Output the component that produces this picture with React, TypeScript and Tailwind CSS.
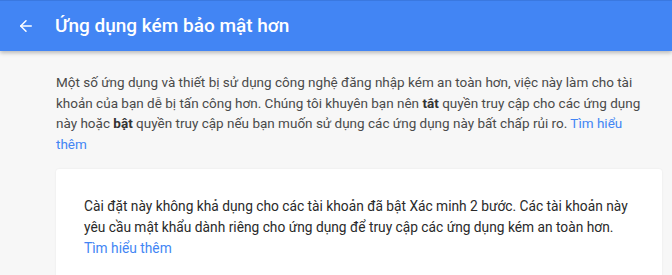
import { ArrowLeft } from 'lucide-react'

export default function App() {
  return (
    <div className="min-h-[275px] w-full bg-[#f7f7f7] font-['Roboto',sans-serif]">
      {/* Header */}
      <div className="flex h-[51px] items-center border-t border-[#3a78e0] bg-[#4285f4] shadow-[0_2px_4px_rgba(0,0,0,0.25)]">
        <ArrowLeft className="ml-[17px] h-[18px] w-[18px] text-white" strokeWidth={2} />
        <h1 className="ml-[20px] text-[19px] font-medium text-white">Ứng dụng kém bảo mật hơn</h1>
      </div>

      <div className="px-[56px] pt-[21px]">
        <p className="w-[594px] text-[13.5px] leading-[20.6px] text-[#4a4a4a]">
          Một số ứng dụng và thiết bị sử dụng công nghệ đăng nhập kém an toàn hơn, việc này làm cho tài khoản của
          bạn dễ bị tấn công hơn. Chúng tôi khuyên bạn nên <b className="font-bold text-[#333]">tắt</b> quyền truy cập cho các ứng dụng
          này hoặc <b className="font-bold text-[#333]">bật</b> quyền truy cập nếu bạn muốn sử dụng các ứng dụng này bất chấp rủi ro.{' '}
          <a className="text-[#4285f4]">Tìm hiểu thêm</a>
        </p>

        <div className="mt-[15px] w-[606px] rounded-[3px] bg-white px-[28px] pb-[40px] pt-[27px] shadow-[0_0_2px_rgba(0,0,0,0.08)]">
          <p className="text-[13.75px] leading-[20.6px] text-[#2a2a2a]">
            Cài đặt này không khả dụng cho các tài khoản đã bật Xác minh 2 bước. Các tài khoản này yêu cầu mật khẩu
            dành riêng cho ứng dụng để truy cập các ứng dụng kém an toàn hơn.{' '}
            <a className="text-[#4285f4]">Tìm hiểu thêm</a>
          </p>
        </div>
      </div>
    </div>
  )
}
